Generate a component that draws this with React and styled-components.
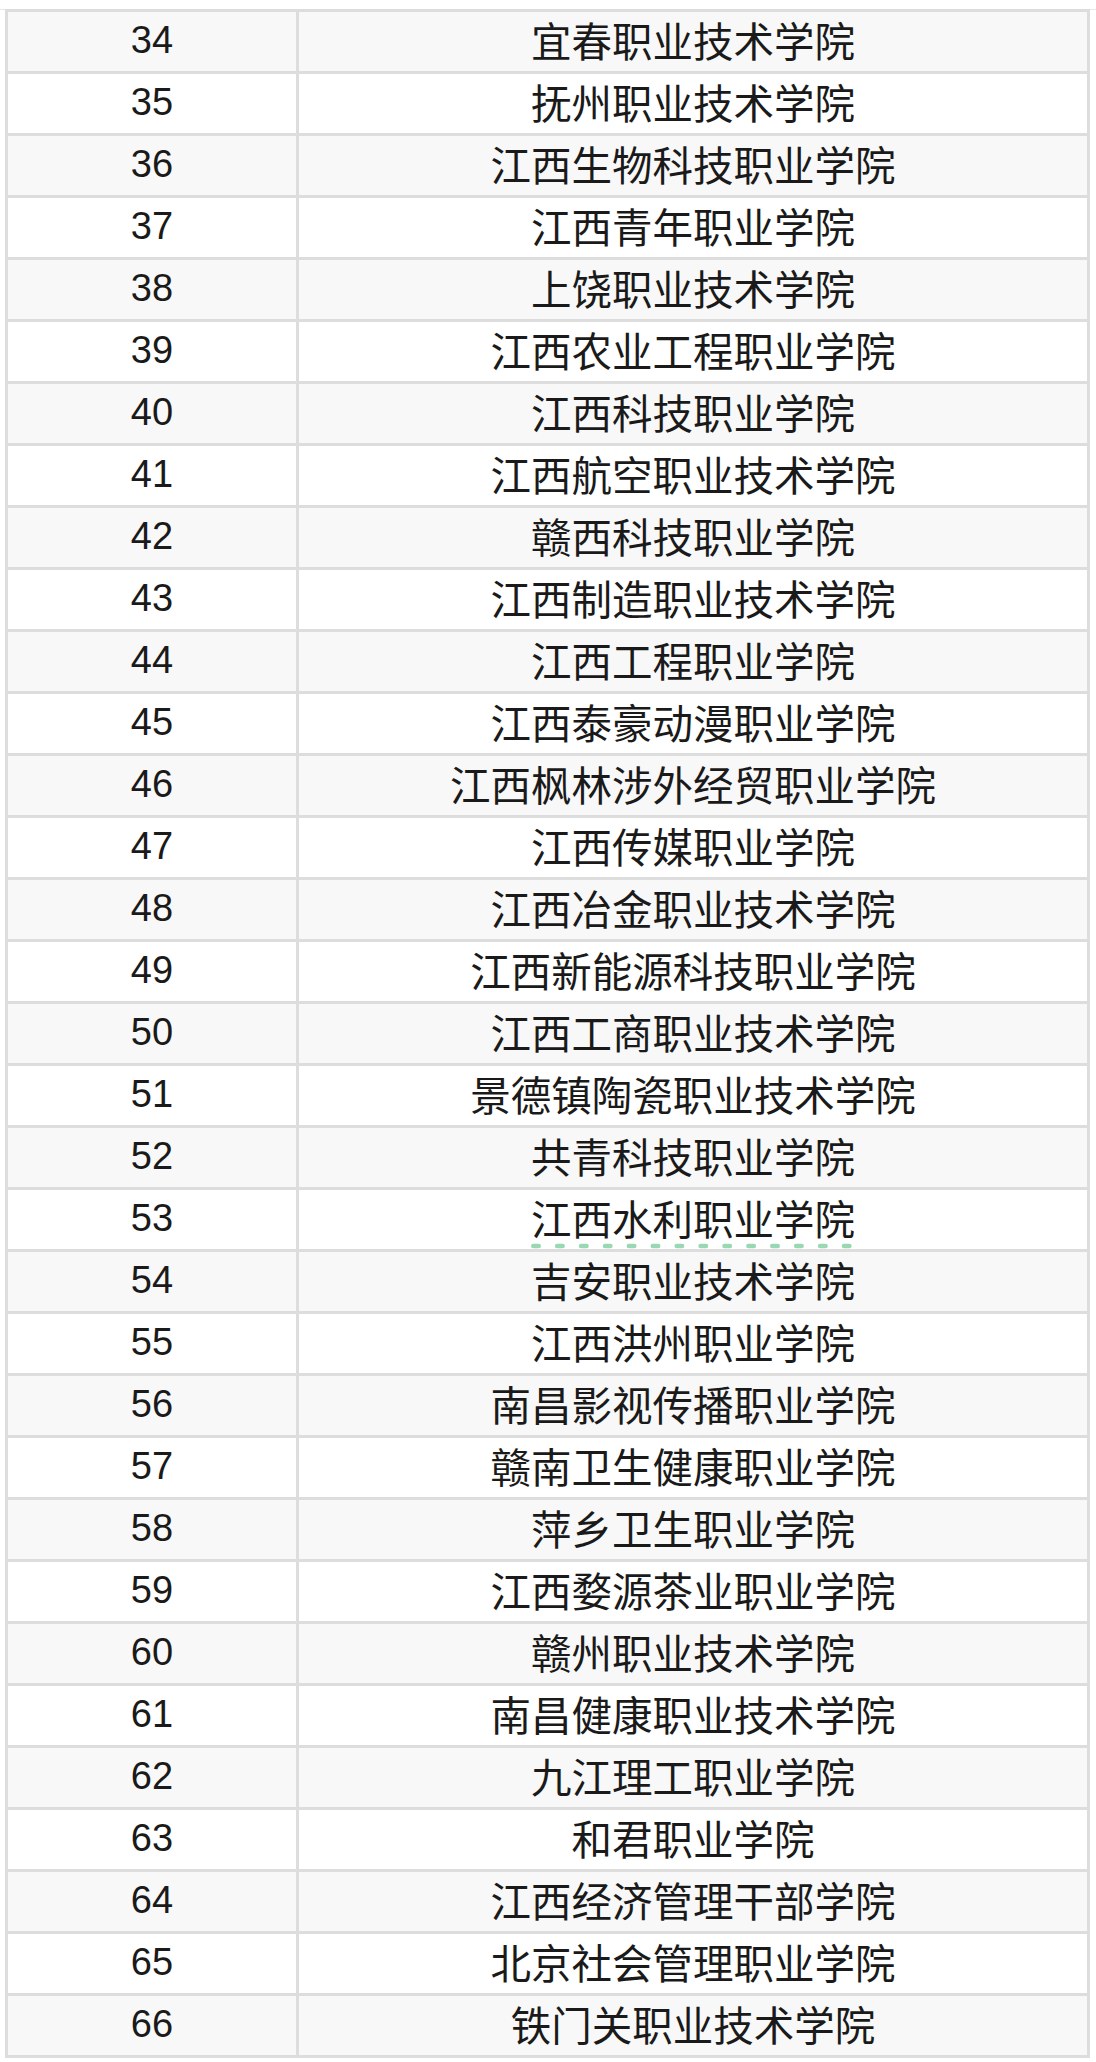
import React from "react";
import styled, { createGlobalStyle } from "styled-components";

const GlobalStyle = createGlobalStyle`
  html, body {
    margin: 0;
    padding: 0;
    background: #ffffff;
  }
  body {
    font-family: "Liberation Sans", "Noto Sans CJK SC", sans-serif;
    color: #1c1c1c;
  }
`;

const Page = styled.div`
  width: 1096px;
  min-height: 2062px;
  padding-top: 9px;
  box-sizing: border-box;
  background: #ffffff;
`;

const TopRule = styled.div`
  height: 1px;
  background: #e6e8e7;
`;

const Table = styled.div`
  margin-left: 5px;
  width: 1085px;
  box-sizing: border-box;
  display: grid;
  grid-template-columns: 288px 788px;
  grid-auto-rows: 59px;
  gap: 3px;
  padding: 3px;
  margin-top: -1px;
  background: #dddddd;
`;

const Cell = styled.div`
  display: flex;
  align-items: center;
  justify-content: center;
  background: ${(p) => (p.$striped ? "#f8f8f8" : "#ffffff")};
  color: #1a1a1a;
  white-space: nowrap;
`;

const NumCell = styled(Cell)`
  font-family: "Liberation Sans", Arial, sans-serif;
  font-size: 38px;
  padding-bottom: 3px;
`;

const NameCell = styled(Cell)`
  font-family: "Noto Sans CJK SC", "Liberation Sans", sans-serif;
  font-size: 40.5px;
  padding-bottom: 5px;
`;

const Marked = styled.span`
  position: relative;
  display: inline-block;
`;

const DashLine = styled.svg`
  position: absolute;
  left: 0;
  bottom: -2px;
  width: 322px;
  height: 6px;
  overflow: visible;
`;

const names = [
  "宜春职业技术学院",
  "抚州职业技术学院",
  "江西生物科技职业学院",
  "江西青年职业学院",
  "上饶职业技术学院",
  "江西农业工程职业学院",
  "江西科技职业学院",
  "江西航空职业技术学院",
  "赣西科技职业学院",
  "江西制造职业技术学院",
  "江西工程职业学院",
  "江西泰豪动漫职业学院",
  "江西枫林涉外经贸职业学院",
  "江西传媒职业学院",
  "江西冶金职业技术学院",
  "江西新能源科技职业学院",
  "江西工商职业技术学院",
  "景德镇陶瓷职业技术学院",
  "共青科技职业学院",
  "江西水利职业学院",
  "吉安职业技术学院",
  "江西洪州职业学院",
  "南昌影视传播职业学院",
  "赣南卫生健康职业学院",
  "萍乡卫生职业学院",
  "江西婺源茶业职业学院",
  "赣州职业技术学院",
  "南昌健康职业技术学院",
  "九江理工职业学院",
  "和君职业学院",
  "江西经济管理干部学院",
  "北京社会管理职业学院",
  "铁门关职业技术学院",
];

const rows = names.map((name, i) => ({ no: 34 + i, name }));

function Underlined({ children }) {
  return (
    <Marked>
      {children}
      <DashLine viewBox="0 0 322 6">
        <line
          x1="2.25"
          y1="3"
          x2="319"
          y2="3"
          stroke="#9ad8b3"
          strokeWidth="4.5"
          strokeLinecap="round"
          strokeDasharray="5.5 18.4"
        />
      </DashLine>
    </Marked>
  );
}

export default function App() {
  return (
    <>
      <GlobalStyle />
      <Page>
        <TopRule />
        <Table>
          {rows.map((r, i) => {
            const striped = i % 2 === 0;
            return (
              <React.Fragment key={r.no}>
                <NumCell $striped={striped}>{r.no}</NumCell>
                <NameCell $striped={striped}>
                  {r.no === 53 ? <Underlined>{r.name}</Underlined> : r.name}
                </NameCell>
              </React.Fragment>
            );
          })}
        </Table>
      </Page>
    </>
  );
}
